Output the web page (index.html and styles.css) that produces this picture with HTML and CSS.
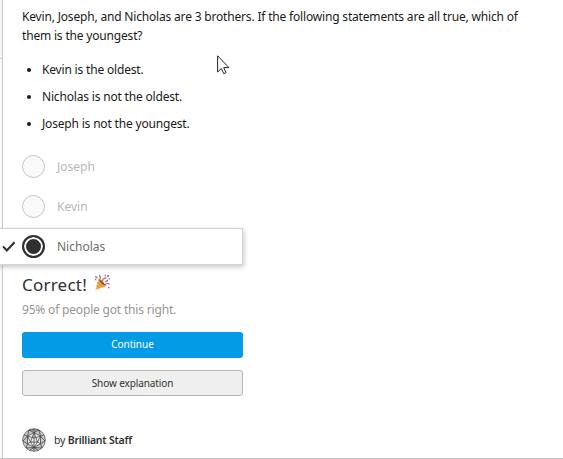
FILE: index.html
```html
<!DOCTYPE html>
<html lang="en">
<head>
<meta charset="utf-8">
<title>Quiz</title>
<link rel="stylesheet" href="styles.css">
</head>
<body>
<div class="page">
  <aside class="rail"><div class="rail-top"></div></aside>
  <main class="card">
    <p class="question">Kevin, Joseph, and Nicholas are 3 brothers. If the following statements are all true, which of<br>them is the youngest?</p>
    <ul class="facts">
      <li>Kevin is the oldest.</li>
      <li>Nicholas is not the oldest.</li>
      <li>Joseph is not the youngest.</li>
    </ul>
    <div class="options">
      <div class="option"><span class="radio"></span><span>Joseph</span></div>
      <div class="option"><span class="radio"></span><span>Kevin</span></div>
      <div class="option selected">
        <svg class="check" width="14" height="12" viewBox="0 0 14 12"><path d="M1 5.400 4.800 9.400 12.600 1.200" fill="none" stroke="#303030" stroke-width="2.100"/></svg>
        <span class="radio"></span><span>Nicholas</span>
      </div>
    </div>
    <h2 class="result"><span>Correct!</span>
      <svg class="party" width="17" height="17" viewBox="0 0 17 17">
        <path d="M4.500 5 12 12.200 1.500 16Z" fill="#f2b443"/>
        <path d="M4.500 5Q9 6 12 12.200Q7 11 4.500 5Z" fill="#8c5b34"/>
        <path d="m3.600 8 5 5.200M2.700 11l3.200 3.200" stroke="#c87a35" stroke-width="1"/>
        <path d="M5.500 5.500Q7.500 3.500 5.200 1M8.500 7.500Q8.500 4 12.500 4M11 11q2-3 4.500-.5" fill="none" stroke="#e26c78" stroke-width="1.300"/>
        <path d="M1.300 2.200 3.200 4M15 1.500l-2 1.200M11.500 7.800 14 6" stroke="#5a82cb" stroke-width="1.500"/>
        <path d="M10.500 1.500h1.400M14.500 4.800h1.400M14 13.500h1.500M1 5.500h1.300" stroke="#e45c70" stroke-width="1.400"/>
      </svg>
    </h2>
    <p class="stat">95% of people got this right.</p>
    <button class="btn primary">Continue</button>
    <button class="btn secondary">Show explanation</button>
    <footer class="author">
      <svg width="24" height="24" viewBox="0 0 24 24" fill="none" stroke="#484848" stroke-width=".8">
        <circle cx="12" cy="12" r="11.300" fill="#c8c8c8" stroke="#777" stroke-width="1"/>
        <path d="M12 4.500 18.500 8.200v7.600L12 19.500 5.500 15.800V8.200Z" fill="#eee"/>
        <path d="M12 1v22M12 4.500 7 2M12 4.500 17 2M5.500 8.200 7 2M18.500 8.200 17 2M5.500 8.200 2 7M18.500 8.200 22 7M5.500 8.200 1 13l4.500 2.800L4 20M18.500 8.200 23 13l-4.500 2.800L20 20M12 19.500 7.500 22.500M12 19.500l4.500 3M4 20l8-.5 8 .5M7 2h10M12 4.500 8.500 14h7ZM5.500 8.200 8.500 14 5.500 15.800M18.500 8.200 15.500 14l3 1.800M8.500 14l3.500 5.500 3.500-5.500M5.500 8.200 12 10l6.500-1.800"/>
      </svg>
      <span class="by">by <b>Brilliant Staff</b></span>
    </footer>
  </main>
  <svg class="cursor" width="13" height="20" viewBox="0 0 13 20"><path d="M.6.8v16.200l3.700-3.500 2.500 5.200 2.300-1.100-2.400-5h5.200Z" fill="#fff" stroke="#24242c"/></svg>
</div>
</body>
</html>
```
FILE: styles.css
```css
* { box-sizing: border-box; }
body { margin: 0; background: #fff; font-family: "Noto Sans", "Open Sans", sans-serif; font-size: 12px; color: #1a1a1a; }
p, ul, h2 { margin: 0; padding: 0; }
.page { position: relative; display: flex; width: 563px; height: 459px; overflow: hidden; border-bottom: 1px solid #c8c8c8; }
.rail { width: 3px; border-right: 1px solid #ccc; background: #fafafa; }
.rail-top { height: 59px; background: #f5f5f5; border-bottom: 1px solid #ccc; }
.card { flex: 1; padding: 7px 0 0 19px; white-space: nowrap; }
.question { line-height: 19px; height: 38px; letter-spacing: -.18px; }
.facts { list-style: none; margin-top: 11px; letter-spacing: -.18px; }
.facts li { display: flex; align-items: center; height: 27px; }
.facts li::before { content: ""; width: 4px; height: 4px; margin: 0 11px 0 5px; border-radius: 50%; background: #1a1a1a; }
.options { margin-top: 9px; }
.option { display: flex; align-items: center; height: 40px; gap: 12px; color: #b7b7b7; }
.radio { flex: none; width: 23px; height: 23px; border: 1px solid #c5c5c5; border-radius: 50%; background: #fafafa; }
.selected { position: relative; width: 246px; height: 37px; margin: 2px 0 0 -25px; padding-left: 25px; background: #fff; border: 1px solid #d3d3d3; border-left: 0; box-shadow: 1px 2px 5px rgba(0,0,0,.22); color: #6c6c6c; }
.selected .radio { border: 2px solid #303030; background: #303030; box-shadow: inset 0 0 0 2px #fff; }
.check { position: absolute; left: 5px; top: 12px; }
.result { display: flex; align-items: center; gap: 7px; height: 28px; margin-top: 5px; font-size: 17px; font-weight: 400; letter-spacing: .22px; color: #303030; }
.party { margin-top: -3px; }
.stat { height: 22px; line-height: 24px; letter-spacing: -.18px; color: #969696; }
.btn { display: block; width: 221px; height: 26px; padding: 0 0 2px; border-radius: 3px; font: 10px "Noto Sans", sans-serif; }
.primary { margin-top: 12px; border: 0; color: #fff; background: #039be5; }
.secondary { margin-top: 12px; padding-bottom: 1px; border: 1px solid #b8b8b8; color: #303030; background: #efefef; letter-spacing: -.1px; }
.author { display: flex; align-items: center; gap: 8px; height: 24px; margin-top: 32px; font-size: 10.500px; letter-spacing: -.2px; color: #303030; }
.author b { font-weight: 600; }
.cursor { position: absolute; left: 217px; top: 55px; }
```
